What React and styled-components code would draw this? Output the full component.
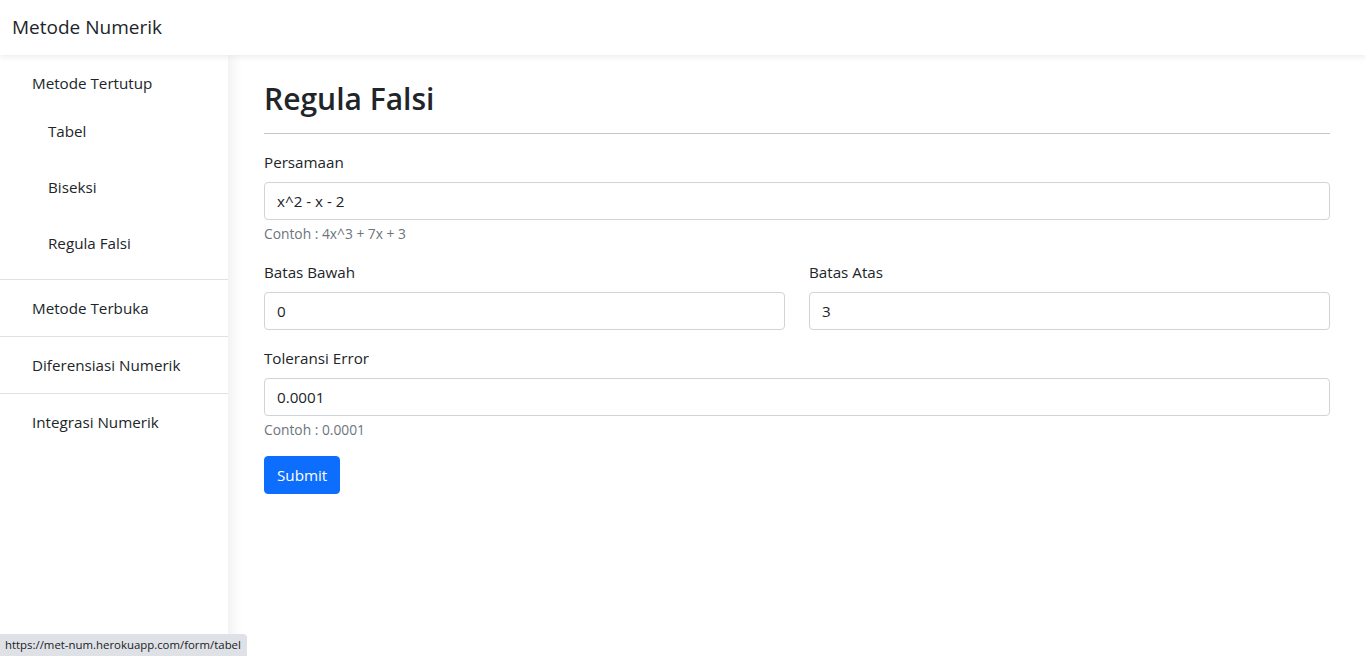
import React from "react";
import styled, { createGlobalStyle } from "styled-components";

const Global = createGlobalStyle`
  html, body { margin: 0; padding: 0; background: #fff; }
  body {
    font-family: "Open Sans", "Noto Sans", sans-serif;
    font-size: 16px;
    color: #212529;
    line-height: 1.5;
  }
  * { box-sizing: border-box; }
`;

const Page = styled.div`
  display: flex;
  flex-direction: column;
  min-height: 656px;
`;

const Navbar = styled.header`
  height: 55px;
  display: flex;
  align-items: center;
  padding: 0 12px;
  background: #fff;
  box-shadow: 0 2px 6px rgba(0, 0, 0, 0.08);
  position: relative;
  z-index: 2;
`;

const Brand = styled.span`
  font-size: 19px;
  color: #212529;
  line-height: 1;
`;

const Body = styled.div`
  display: flex;
  flex: 1;
`;

const Sidebar = styled.nav`
  width: 228px;
  flex-shrink: 0;
  min-height: 601px;
  background: #fff;
  box-shadow: 4px 0 12px rgba(0, 0, 0, 0.07);
  position: relative;
  z-index: 1;
`;

const Group = styled.div`
  border-bottom: ${(p) => (p.$last ? "none" : "1px solid #dee2e6")};
  padding: 16px 0 ${(p) => (p.$tall ? "24px" : "16px")};
`;

const GroupTitle = styled.div`
  padding-left: 32px;
  font-size: 15.2px;
  line-height: 24px;
`;

const SubItem = styled.div`
  padding-left: 48px;
  font-size: 15.2px;
  line-height: 24px;
  margin-top: 24px;
  & + & { margin-top: 32px; }
`;

const Main = styled.main`
  flex: 1;
  padding: 23px 36px 0 36px;
`;

const Title = styled.h1`
  margin: 0;
  font-size: 30px;
  font-weight: 600;
  line-height: 42px;
`;

const Rule = styled.hr`
  border: 0;
  border-top: 1px solid #c6c6c6;
  margin: 13px 0 16px;
`;

const Field = styled.div`
  margin-bottom: 16px;
`;

const Label = styled.label`
  display: block;
  font-size: 15.2px;
  line-height: 24px;
  margin-bottom: 8px;
`;

const Input = styled.input`
  display: block;
  width: 100%;
  height: 38px;
  padding: 6px 12px;
  font-family: inherit;
  font-size: 15.2px;
  color: #212529;
  border: 1px solid #ced4da;
  border-radius: 4px;
  background: #fff;
  outline: none;
`;

const Help = styled.div`
  margin-top: 4px;
  font-size: 13.8px;
  color: #6c757d;
  line-height: 20px;
`;

const Row = styled.div`
  display: grid;
  grid-template-columns: 1fr 1fr;
  column-gap: 24px;
  margin-bottom: 16px;
`;

const Button = styled.button`
  height: 38px;
  padding: 0 12px;
  background: #0d6efd;
  border: 1px solid #0d6efd;
  border-radius: 4px;
  color: #fff;
  font-family: inherit;
  font-size: 15.2px;
`;

const StatusTip = styled.div`
  position: fixed;
  left: 0;
  bottom: 0;
  height: 22px;
  padding: 0 6px 0 5px;
  background: #dee1e6;
  border-top-right-radius: 4px;
  font-family: "Open Sans", "Noto Sans", sans-serif;
  font-size: 11.4px;
  line-height: 22px;
  color: #202124;
  z-index: 5;
`;

export default function App() {
  return (
    <Page>
      <Global />
      <Navbar>
        <Brand>Metode Numerik</Brand>
      </Navbar>
      <Body>
        <Sidebar>
          <Group $tall>
            <GroupTitle>Metode Tertutup</GroupTitle>
            <SubItem>Tabel</SubItem>
            <SubItem>Biseksi</SubItem>
            <SubItem>Regula Falsi</SubItem>
          </Group>
          <Group>
            <GroupTitle>Metode Terbuka</GroupTitle>
          </Group>
          <Group>
            <GroupTitle>Diferensiasi Numerik</GroupTitle>
          </Group>
          <Group $last>
            <GroupTitle>Integrasi Numerik</GroupTitle>
          </Group>
        </Sidebar>
        <Main>
          <Title>Regula Falsi</Title>
          <Rule />
          <Field>
            <Label>Persamaan</Label>
            <Input defaultValue="x^2 - x - 2" />
            <Help>Contoh : 4x^3 + 7x + 3</Help>
          </Field>
          <Row>
            <div>
              <Label>Batas Bawah</Label>
              <Input defaultValue="0" />
            </div>
            <div>
              <Label>Batas Atas</Label>
              <Input defaultValue="3" />
            </div>
          </Row>
          <Field>
            <Label>Toleransi Error</Label>
            <Input defaultValue="0.0001" />
            <Help>Contoh : 0.0001</Help>
          </Field>
          <Button>Submit</Button>
        </Main>
      </Body>
      <StatusTip>https://met-num.herokuapp.com/form/tabel</StatusTip>
    </Page>
  );
}
